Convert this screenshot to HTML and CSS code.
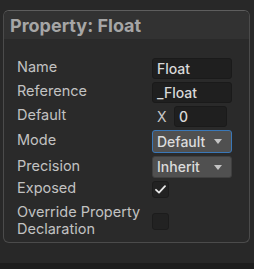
FILE: index.html
```html
<!DOCTYPE html>
<html lang="en">
<head>
    <meta charset="UTF-8">
    <title>Property: Float</title>
<link rel="stylesheet" href="styles.css">
</head>
<body>
    <div class="panel">
        <div class="panel-head">Property: Float</div>
        <div class="panel-body">
            <div class="row">
                <span class="label">Name</span>
                <div class="field">Float</div>
            </div>
            <div class="row">
                <span class="label">Reference</span>
                <div class="field">_Float</div>
            </div>
            <div class="row">
                <span class="label">Default</span>
                <div class="vec">
                    <span class="axis">X</span>
                    <div class="field small">0</div>
                </div>
            </div>
            <div class="row tall">
                <span class="label">Mode</span>
                <div class="dropdown focus">Default<i class="arrow"></i></div>
            </div>
            <div class="row">
                <span class="label">Precision</span>
                <div class="dropdown">Inherit<i class="arrow"></i></div>
            </div>
            <div class="row check-row">
                <span class="label">Exposed</span>
                <div class="checkbox">
                    <svg width="11" height="9" viewBox="0 0 11 9"><path d="M1 4.8 L4 7.6 L10 1.2" fill="none" stroke="#e8e8e8" stroke-width="1.8" stroke-linecap="round" stroke-linejoin="round"/></svg>
                </div>
            </div>
            <div class="row wrap-row">
                <span class="label">Override Property Declaration</span>
                <div class="checkbox"></div>
            </div>
        </div>
    </div>
    <div class="footer"></div>
</body>
</html>
```

FILE: styles.css
```css
html, body{
    margin: 0;
    padding: 0;
}
body{
    width: 254px;
    height: 269px;
    background-color: #282828;
    font-family: Inter, "Noto Sans", sans-serif;
    font-size: 13px;
    color: #c2c2c2;
    overflow: hidden;
    display: flex;
    flex-direction: column;
}
.panel{
    margin: 10px 4px 0 3px;
    border: 1px solid #4b4b4b;
    border-top-color: #5e5e5e;
    border-radius: 6px;
    background-color: #2a2a2a;
}
.panel-head{
    height: 28px;
    padding-left: 6px;
    font-size: 18px;
    font-weight: 700;
    line-height: 30px;
    color: #a6a6a6;
    background-color: #323232;
    border-radius: 5px 5px 0 0;
}
.panel-body{
    padding: 19px 0 4px 13px;
    display: flex;
    flex-direction: column;
    gap: 3px;
}
.row{
    display: grid;
    grid-template-columns: 135px 80px;
    align-items: center;
    height: 21px;
}
.row.tall{
    height: 22px;
    margin-bottom: 1px;
}
.check-row{
    height: 18px;
    margin-bottom: 3px;
}
.wrap-row{
    height: 34px;
}
.label{
    font-size: 14.5px;
    white-space: normal;
    margin-top: -4px;
}
.wrap-row .label{
    line-height: 17px;
    margin-top: -3px;
}
.field{
    border: 1px solid #1a1a1a;
    border-radius: 3px;
    background-color: #1f1f1f;
    color: #d8d8d8;
    font-size: 14px;
    font-weight: 500;
    line-height: 20px;
    padding-left: 4px;
    box-sizing: border-box;
    height: 21px;
}
.vec{
    display: flex;
    align-items: center;
    padding-left: 5px;
}
.axis{
    width: 17px;
    font-size: 14px;
    color: #c8c8c8;
}
.field.small{
    width: 53px;
}
.dropdown{
    position: relative;
    height: 100%;
    box-sizing: border-box;
    border: 1px solid #3f3f3f;
    border-radius: 3px;
    background-color: #505050;
    color: #dcdcdc;
    font-size: 14px;
    font-weight: 500;
    line-height: 20px;
    padding-left: 4px;
}
.dropdown.focus{
    border-color: #3a78b8;
    line-height: 21px;
}
.arrow{
    position: absolute;
    right: 9px;
    top: 8px;
    width: 0;
    height: 0;
    border-left: 4px solid transparent;
    border-right: 4px solid transparent;
    border-top: 5px solid #c4c4c4;
}
.checkbox{
    width: 17px;
    height: 17px;
    box-sizing: border-box;
    border: 1px solid #1c1c1c;
    border-radius: 3px;
    background-color: #222222;
    display: flex;
    align-items: center;
    justify-content: center;
}
.footer{
    margin-top: auto;
    height: 6px;
    background-color: #1d1d1d;
}
```
